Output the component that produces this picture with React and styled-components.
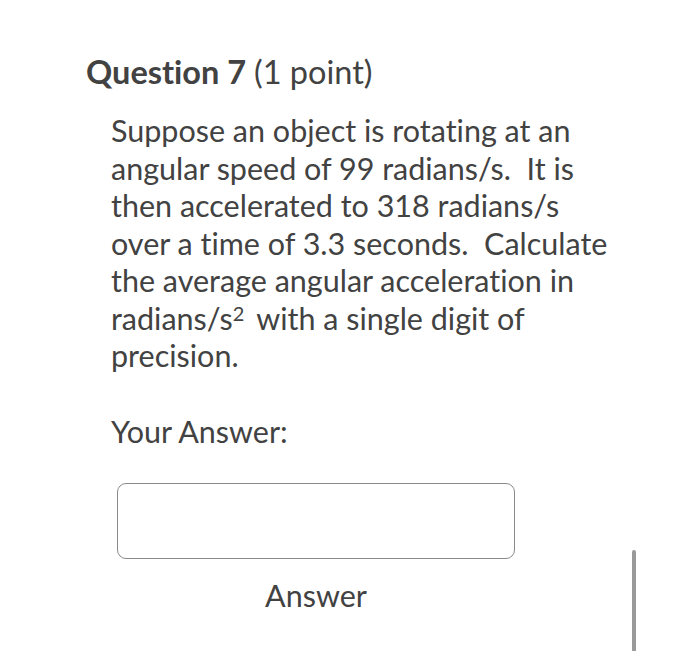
import styled, { createGlobalStyle } from "styled-components";

const GlobalStyle = createGlobalStyle`
  html, body {
    margin: 0;
    padding: 0;
    background: #ffffff;
  }
  body {
    font-family: Lato, "Noto Sans", sans-serif;
    font-variant-ligatures: none;
    font-feature-settings: "liga" 0;
    color: #3f3f3f;
  }
`;

const Page = styled.div`
  position: relative;
  width: 700px;
  height: 651px;
  overflow: hidden;
  background: #ffffff;
  padding: 51px 0 0 86px;
  box-sizing: border-box;
`;

const Heading = styled.h2`
  margin: 0;
  font-size: 32.5px;
  line-height: 42px;
  font-weight: 700;
  color: #424242;
`;

const Points = styled.span`
  font-weight: 400;
`;

const Body = styled.div`
  padding: 19px 0 0 25px;
  width: 560px;
`;

const Prompt = styled.p`
  margin: 0;
  font-size: 30.5px;
  line-height: 37.5px;
  color: #424242;
  white-space: nowrap;

  sup {
    display: inline-block;
    font-size: 20px;
    font-weight: 400;
    line-height: 20px;
    vertical-align: 9px;
    margin-right: 12px;
  }
`;

const Label = styled.p`
  margin: 38px 0 0;
  font-size: 30.5px;
  line-height: 37.5px;
  color: #424242;
`;

const AnswerBlock = styled.div`
  display: flex;
  flex-direction: column;
  align-items: center;
  width: 398px;
  margin: 33px 0 0 31px;
  gap: 19px;
`;

const AnswerInput = styled.div`
  width: 398px;
  height: 76px;
  box-sizing: border-box;
  border: 1.5px solid #8a8a8a;
  border-radius: 9px;
  background: #ffffff;
`;

const AnswerCaption = styled.div`
  font-size: 30.5px;
  line-height: 34px;
  color: #424242;
`;

const ScrollThumb = styled.div`
  position: absolute;
  left: 632px;
  top: 550px;
  width: 4px;
  height: 110px;
  border-radius: 2px;
  background: #9a9a9a;
`;

export default function App() {
  return (
    <>
      <GlobalStyle />
      <Page>
        <Heading>
          Question 7 <Points>(1 point)</Points>
        </Heading>
        <Body>
          <Prompt>
            Suppose an object is rotating at an
            <br />
            angular speed of 99 radians/s.&nbsp; It is
            <br />
            then accelerated to 318 radians/s
            <br />
            over a time of 3.3 seconds.&nbsp; Calculate
            <br />
            the average angular acceleration in
            <br />
            radians/s<sup>2</sup>with a single digit of
            <br />
            precision.
          </Prompt>
          <Label>Your Answer:</Label>
        </Body>
        <AnswerBlock>
          <AnswerInput />
          <AnswerCaption>Answer</AnswerCaption>
        </AnswerBlock>
        <ScrollThumb />
      </Page>
    </>
  );
}
